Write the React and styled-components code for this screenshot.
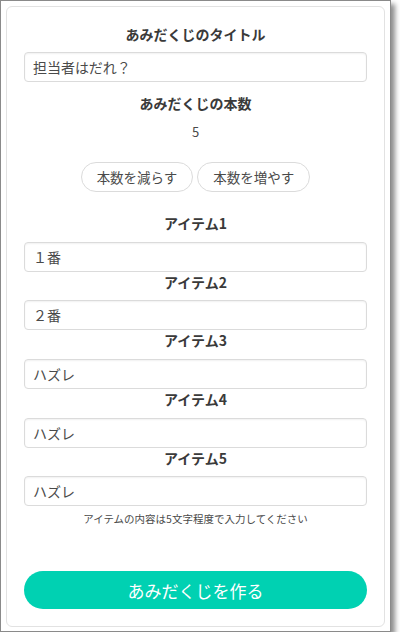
import React, { useState } from 'react';
import styled, { createGlobalStyle } from 'styled-components';

const GlobalStyle = createGlobalStyle`
  html, body {
    margin: 0;
    padding: 0;
    background: #fff;
  }
  body {
    font-family: "Noto Sans CJK JP", "Noto Sans", sans-serif;
    color: #4a4a4a;
  }
  * {
    box-sizing: border-box;
  }
`;

const Window = styled.div`
  width: 391px;
  height: 632px;
  border: 1px solid #8a8a8a;
  background: #fff;
  box-shadow: 4px 4px 5px rgba(0, 0, 0, 0.45);
  padding: 5px;
`;

const Card = styled.div`
  height: 621px;
  width: 379px;
  border: 1px solid #e2e2e2;
  border-radius: 6px;
  padding: 17px;
  display: flex;
  flex-direction: column;
`;

const Label = styled.div`
  text-align: center;
  font-size: 14px;
  line-height: 21px;
  font-weight: bold;
  color: #3a3a3a;
  margin-top: ${props => props.top || 0}px;
  margin-bottom: ${props => props.bottom || 0}px;
`;

const TextInput = styled.input`
  display: block;
  width: 100%;
  height: 30px;
  padding: 0 8px;
  border: 1px solid #dbdbdb;
  border-radius: 4px;
  box-shadow: inset 0 1px 2px rgba(10, 10, 10, 0.06);
  font-family: inherit;
  font-size: 14px;
  color: #4a4a4a;
  outline: none;
`;

const Count = styled.div`
  text-align: center;
  font-size: 13px;
  line-height: 21px;
  color: #4a4a4a;
  margin-top: 7px;
`;

const Buttons = styled.div`
  display: flex;
  justify-content: center;
  gap: 4px;
  margin-top: 20px;
  margin-bottom: 21px;
`;

const PillButton = styled.button`
  height: 30px;
  padding: 0 15px;
  border: 1px solid #dbdbdb;
  border-radius: 9999px;
  background: #fff;
  font-family: inherit;
  font-size: 13.5px;
  color: #4a4a4a;
  cursor: pointer;
`;

const Help = styled.p`
  margin: 4px 0 0;
  text-align: center;
  font-size: 10.5px;
  line-height: 18px;
  color: #4a4a4a;
`;

const MakeButton = styled.button`
  margin-top: auto;
  height: 38px;
  width: 100%;
  border: none;
  border-radius: 9999px;
  background: #00d1b2;
  color: #fff;
  font-family: inherit;
  font-size: 17px;
  cursor: pointer;
`;

const App = () => {
  const [title, setTitle] = useState('担当者はだれ？');
  const [items, setItems] = useState(['１番', '２番', 'ハズレ', 'ハズレ', 'ハズレ']);

  const update = (i, v) => setItems(items.map((it, j) => (j === i ? v : it)));

  return (
    <>
      <GlobalStyle />
      <Window>
        <Card>
          <Label bottom={7}>あみだくじのタイトル</Label>
          <TextInput value={title} onChange={e => setTitle(e.target.value)} />
          <Label top={11}>あみだくじの本数</Label>
          <Count>{items.length}</Count>
          <Buttons>
            <PillButton onClick={() => setItems(items.slice(0, -1))}>本数を減らす</PillButton>
            <PillButton onClick={() => setItems([...items, 'ハズレ'])}>本数を増やす</PillButton>
          </Buttons>
          {items.map((item, i) => (
            <React.Fragment key={i}>
              <Label bottom={7.7}>アイテム{i + 1}</Label>
              <TextInput value={item} onChange={e => update(i, e.target.value)} />
            </React.Fragment>
          ))}
          <Help>アイテムの内容は5文字程度で入力してください</Help>
          <MakeButton>あみだくじを作る</MakeButton>
        </Card>
      </Window>
    </>
  );
};

export default App;
